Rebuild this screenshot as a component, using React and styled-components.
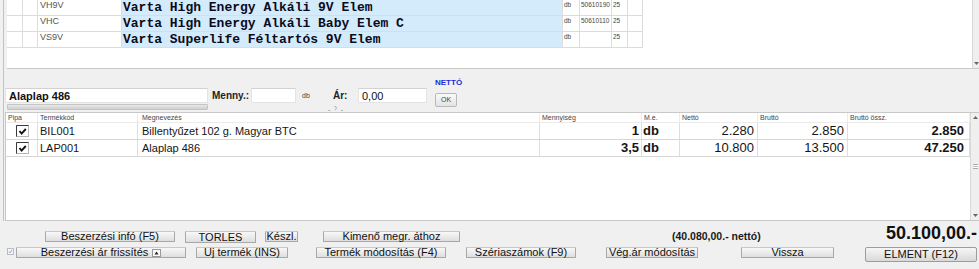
import React from 'react'
import styled, { createGlobalStyle } from 'styled-components'

const GlobalStyle = createGlobalStyle`
  html, body {
    margin: 0;
    padding: 0;
    background: #f0f0f0;
  }
  body {
    font-family: "Liberation Sans", Arial, sans-serif;
    color: #111;
  }
  * { box-sizing: border-box; }
`

const Screen = styled.div`
  width: 979px;
  height: 269px;
  overflow: hidden;
  background: #f0f0f0;
  display: flex;
  flex-direction: column;
`

const Workspace = styled.div`
  display: flex;
  height: 221px;
  flex: none;
`

const Rail = styled.div`
  width: 4px;
  flex: none;
  border-right: 1px solid #b3c6d9;
`

const Content = styled.div`
  flex: 1;
  display: flex;
  flex-direction: column;
  padding-left: 1px;
  min-width: 0;
`

/* ---- stock grid on top ---- */

const TopPanel = styled.div`
  margin-left: 2px;
  height: 69px;
  flex: none;
  background: #fff;
  border-bottom: 1px solid #c9c9c9;
  display: flex;
`

const StockGrid = styled.div`
  flex: 1;
`

const StockRow = styled.div`
  display: grid;
  grid-template-columns: 16px 15px 84px 441px 17px 32px 16px 15px;
  height: 16px;
`

const StockCell = styled.div`
  border-right: 1px solid #dcdcdc;
  border-bottom: 1px solid #dcdcdc;
  overflow: hidden;
  white-space: nowrap;
  ${(p) => p.$kind === 'name' && `
    background: #d3ebfb;
    font-family: "Liberation Mono", "Courier New", monospace;
    font-weight: bold;
    font-size: 13px;
    line-height: 15px;
    color: #0b0b1e;
    padding-left: 1px;
  `}
  ${(p) => p.$kind === 'code' && `
    font-size: 9px;
    line-height: 9px;
    padding: 1px 0 0 2px;
    color: #555;
  `}
  ${(p) => p.$kind === 'tiny' && `
    font-size: 6.5px;
    line-height: 8px;
    padding: 1px 0 0 1px;
    color: #444;
  `}
`

const VScroll = styled.div`
  width: ${(p) => p.$w}px;
  flex: none;
  background: #efefef;
  border-left: 1px solid #d8d8d8;
  display: flex;
  flex-direction: column;
  justify-content: ${(p) => (p.$grip ? 'space-between' : 'flex-end')};
  align-items: center;
  padding: 3px 0;
`

const Arrow = ({ up }) => (
  <svg width="5" height="3" viewBox="0 0 5 3">
    <path d={up ? 'M0 3 L2.5 0 L5 3 Z' : 'M0 0 L2.5 3 L5 0 Z'} fill="#666" />
  </svg>
)

const Grip = styled.div`
  width: 5px;
  height: 5px;
  border-top: 1px solid #aaa;
  border-bottom: 1px solid #aaa;
  background: repeating-linear-gradient(#fff 0 1px, #bbb 1px 2px);
`

/* ---- entry bar ---- */

const EntryBar = styled.div`
  height: 43px;
  flex: none;
  display: flex;
  align-items: flex-start;
  padding-top: 9px;
`

const FieldRow = styled.div`
  margin-top: 10px;
  display: flex;
  align-items: flex-start;
`

const NameBox = styled.div`
  display: flex;
  flex-direction: column;
`

const Field = styled.input`
  width: ${(p) => p.$w}px;
  height: 15px;
  border: 1px solid #e4e4e4;
  border-top-color: #d2d2d2;
  background: #fff;
  font-family: "Liberation Sans", Arial, sans-serif;
  font-size: 11px;
  font-weight: ${(p) => (p.$bold ? 'bold' : 'normal')};
  color: #111;
  padding: 0 3px;
  outline: none;
`

const HBar = styled.div`
  margin: 1px 0 0 2px;
  width: 201px;
  height: 6px;
  border: 1px solid #c4c4c4;
  background: linear-gradient(#e8e8e8, #cfcfcf);
  border-radius: 1px;
`

const Label = styled.div`
  width: ${(p) => p.$w}px;
  margin-left: ${(p) => p.$ml || 0}px;
  font-size: ${(p) => (p.$small ? 7 : 10)}px;
  font-weight: ${(p) => (p.$small ? 'normal' : 'bold')};
  line-height: 15px;
  padding-left: ${(p) => p.$pl || 0}px;
  color: ${(p) => (p.$small ? '#444' : '#222')};
  white-space: nowrap;
`

const LabelStack = styled.div`
  display: flex;
  flex-direction: column;
`

const SplitMark = styled.div`
  margin: 4px 0 0 -5px;
  font-size: 7px;
  line-height: 6px;
  color: #777;
  letter-spacing: 1px;
  white-space: nowrap;
`

const NettoColumn = styled.div`
  margin-left: 8px;
  display: flex;
  flex-direction: column;
  align-items: flex-start;
`

const NettoTag = styled.div`
  font-size: 8px;
  font-weight: bold;
  line-height: 10px;
  color: #1d2ad8;
  margin-bottom: 5px;
`

const OkButton = styled.div`
  width: 22px;
  height: 14px;
  border: 1px solid #b9b9b9;
  border-radius: 2px;
  background: linear-gradient(#fafafa, #e3e3e3);
  font-size: 7px;
  line-height: 12px;
  text-align: center;
  color: #444;
`

/* ---- item table ---- */

const ItemPanel = styled.div`
  height: 109px;
  flex: none;
  background: #fff;
  border: 1px solid #c8c8c8;
  border-right: none;
  display: flex;
`

const ItemTable = styled.div`
  flex: 1;
`

const itemColumns = '32px 100px 402px 102px 38px 78px 90px 122px'

const ItemHead = styled.div`
  display: grid;
  grid-template-columns: ${itemColumns};
  height: 10px;
  border-bottom: 1px solid #ebebeb;
`

const HeadCell = styled.div`
  font-size: 7px;
  line-height: 9px;
  padding-left: ${(p) => p.$pl || 2}px;
  color: #444;
  border-right: 1px solid #ececec;
  white-space: nowrap;
  overflow: hidden;
`

const ItemRow = styled.div`
  display: grid;
  grid-template-columns: ${itemColumns};
  height: 17px;
  border-bottom: 1px solid #d6d6d6;
`

const ItemCell = styled.div`
  border-right: 1px solid #dedede;
  white-space: nowrap;
  overflow: hidden;
  font-size: ${(p) => (p.$num ? 13 : 11)}px;
  font-weight: ${(p) => (p.$bold ? 'bold' : 'normal')};
  line-height: 16px;
  padding: 0 ${(p) => p.$pr || 0}px 0 ${(p) => p.$pl || 0}px;
  color: #151515;
  display: flex;
  align-items: center;
  justify-content: ${(p) => (p.$right ? 'flex-end' : 'flex-start')};
`

const Tick = () => (
  <svg width="13" height="12" viewBox="0 0 13 12" style={{ marginLeft: 10 }}>
    <rect x="0.5" y="0.5" width="12" height="11" fill="#fff" stroke="#b5b5b5" />
    <path d="M0.5 11.5 V0.5 H12.5" stroke="#3a3a3a" fill="none" />
    <path d="M3.5 6 L5.6 8.6 L9.8 4" stroke="#111" strokeWidth="1.9" fill="none" />
  </svg>
)

/* ---- bottom buttons ---- */

const Footer = styled.div`
  flex: 1;
  display: flex;
`

const ButtonArea = styled.div`
  flex: 1;
  display: flex;
  flex-direction: column;
  padding-top: 10px;
`

const ButtonRow = styled.div`
  display: flex;
  align-items: flex-start;
  height: ${(p) => p.$h}px;
`

const Button = styled.div`
  width: ${(p) => p.$w}px;
  height: ${(p) => p.$h || 11}px;
  margin-left: ${(p) => p.$ml || 0}px;
  border: 1px solid #a8a8a8;
  border-top-color: #c9c9c9;
  border-radius: 1px;
  background: linear-gradient(#f8f8f8, #dedede);
  font-size: 11px;
  line-height: ${(p) => (p.$h || 11) - 2}px;
  color: #111;
  display: flex;
  align-items: center;
  justify-content: center;
  gap: 4px;
  white-space: nowrap;
  flex: none;
`

const NetNote = styled.div`
  margin-left: 212px;
  font-size: 10.5px;
  font-weight: bold;
  line-height: 11px;
  color: #1a1a1a;
  white-space: nowrap;
`

const TotalArea = styled.div`
  width: 114px;
  flex: none;
  display: flex;
  flex-direction: column;
  align-items: flex-end;
  padding: 3px 2px 0 0;
`

const Total = styled.div`
  font-size: 18px;
  font-weight: bold;
  line-height: 18px;
  color: #111;
  white-space: nowrap;
`

const SaveButton = styled(Button)`
  margin-top: 5px;
  border-color: #9c9c9c;
  border-radius: 2px;
  background: linear-gradient(#f6f6f6, #d9d9d9);
`

const SmallCheck = () => (
  <svg width="7" height="7" viewBox="0 0 7 7" style={{ marginLeft: 7, marginTop: 1 }}>
    <rect x="0.5" y="0.5" width="6" height="6" fill="#f4f6fa" stroke="#b8bcc6" />
    <path d="M2 3.5 L3 5 L5 2" stroke="#8a94a8" strokeWidth="0.8" fill="none" />
  </svg>
)

const SpinIcon = () => (
  <svg width="9" height="8" viewBox="0 0 9 8">
    <rect x="0.5" y="0.5" width="8" height="7" fill="#fbfbfb" stroke="#9a9a9a" />
    <path d="M2.5 5.5 L4.5 2.5 L6.5 5.5 Z" fill="#222" />
  </svg>
)

const stockRows = [
  { code: 'VH9V', name: 'Varta High Energy Alkáli 9V Elem', vtsz: '50610190' },
  { code: 'VHC', name: 'Varta High Energy Alkáli Baby Elem C', vtsz: '50610110' },
  { code: 'VS9V', name: 'Varta Superlife Féltartós 9V Elem', vtsz: '' },
]

const items = [
  { code: 'BIL001', name: 'Billentyűzet 102 g. Magyar BTC', qty: '1', net: '2.280', gross: '2.850', total: '2.850' },
  { code: 'LAP001', name: 'Alaplap 486', qty: '3,5', net: '10.800', gross: '13.500', total: '47.250' },
]

export default function App() {
  return (
    <Screen>
      <GlobalStyle />
      <Workspace>
        <Rail />
        <Content>
          <TopPanel>
            <StockGrid>
              {stockRows.map((r) => (
                <StockRow key={r.code}>
                  <StockCell />
                  <StockCell />
                  <StockCell $kind="code">{r.code}</StockCell>
                  <StockCell $kind="name">{r.name}</StockCell>
                  <StockCell $kind="tiny">db</StockCell>
                  <StockCell $kind="tiny">{r.vtsz}</StockCell>
                  <StockCell $kind="tiny">25</StockCell>
                  <StockCell />
                </StockRow>
              ))}
            </StockGrid>
            <VScroll $w={7}>
              <Arrow />
            </VScroll>
          </TopPanel>

          <EntryBar>
            <FieldRow>
              <NameBox>
                <Field $w={203} $bold readOnly value="Alaplap 486" />
                <HBar />
              </NameBox>
              <Label $w={39} $ml={4}>Menny.:</Label>
              <Field $w={45} readOnly value="" />
              <Label $w={37} $small $pl={6}>db</Label>
              <LabelStack>
                <Label $w={25}>Ár:</Label>
                <SplitMark>‐ ˀ ‐</SplitMark>
              </LabelStack>
              <Field $w={69} readOnly value="0,00" />
            </FieldRow>
            <NettoColumn>
              <NettoTag>NETTÓ</NettoTag>
              <OkButton>OK</OkButton>
            </NettoColumn>
          </EntryBar>

          <ItemPanel>
            <ItemTable>
              <ItemHead>
                <HeadCell>Pipa</HeadCell>
                <HeadCell>Termékkód</HeadCell>
                <HeadCell $pl={4}>Megnevezés</HeadCell>
                <HeadCell>Mennyiség</HeadCell>
                <HeadCell>M.e.</HeadCell>
                <HeadCell>Nettó</HeadCell>
                <HeadCell>Bruttó</HeadCell>
                <HeadCell>Bruttó össz.</HeadCell>
              </ItemHead>
              {items.map((it) => (
                <ItemRow key={it.code}>
                  <ItemCell><Tick /></ItemCell>
                  <ItemCell $pl={2}>{it.code}</ItemCell>
                  <ItemCell $pl={4}>{it.name}</ItemCell>
                  <ItemCell $num $bold $right $pr={2}>{it.qty}</ItemCell>
                  <ItemCell $num $bold $pl={1}>db</ItemCell>
                  <ItemCell $num $right $pr={3}>{it.net}</ItemCell>
                  <ItemCell $num $right $pr={3}>{it.gross}</ItemCell>
                  <ItemCell $num $bold $right $pr={5}>{it.total}</ItemCell>
                </ItemRow>
              ))}
            </ItemTable>
            <VScroll $w={9} $grip>
              <Arrow up />
              <Grip />
              <Arrow />
            </VScroll>
          </ItemPanel>
        </Content>
      </Workspace>

      <Footer>
        <ButtonArea>
          <ButtonRow $h={16}>
            <Button $w={130} $ml={45}>Beszerzési infó (F5)</Button>
            <Button $w={71} $ml={10} $h={12}>TORLES</Button>
            <Button $w={33} $ml={9}>Készl.</Button>
            <Button $w={137} $ml={25}>Kimenő megr. áthoz</Button>
            <NetNote>(40.080,00.- nettó)</NetNote>
          </ButtonRow>
          <ButtonRow $h={12}>
            <SmallCheck />
            <Button $w={170} $ml={2}>
              Beszerzési ár frissítés <SpinIcon />
            </Button>
            <Button $w={92} $ml={10}>Uj termék (INS)</Button>
            <Button $w={130} $ml={28}>Termék módosítás (F4)</Button>
            <Button $w={110} $ml={20}>Szériaszámok (F9)</Button>
            <Button $w={92} $ml={30}>Vég.ár módosítás</Button>
            <Button $w={93} $ml={43}>Vissza</Button>
          </ButtonRow>
        </ButtonArea>
        <TotalArea>
          <Total>50.100,00.-</Total>
          <SaveButton $w={112} $h={15}>ELMENT (F12)</SaveButton>
        </TotalArea>
      </Footer>
    </Screen>
  )
}
